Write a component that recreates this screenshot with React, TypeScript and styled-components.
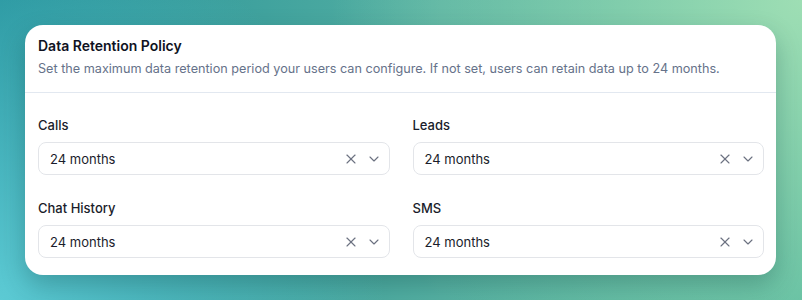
import styled, { createGlobalStyle } from "styled-components";
import { X, ChevronDown } from "lucide-react";

const GlobalStyle = createGlobalStyle`
  html, body {
    margin: 0;
    padding: 0;
  }
  body {
    font-family: Inter, "Noto Sans", sans-serif;
    -webkit-font-smoothing: antialiased;
  }
`;

const fields = [
  { label: "Calls", value: "24 months" },
  { label: "Leads", value: "24 months" },
  { label: "Chat History", value: "24 months" },
  { label: "SMS", value: "24 months" },
];

const RetentionPolicy = () => {
  return (
    <Page>
      <GlobalStyle />
      <Card>
        <Header>
          <Title>Data Retention Policy</Title>
          <Subtitle>
            Set the maximum data retention period your users can configure. If
            not set, users can retain data up to 24 months.
          </Subtitle>
        </Header>
        <Body>
          {fields.map((f) => (
            <Field key={f.label}>
              <Label>{f.label}</Label>
              <Select>
                <Value>{f.value}</Value>
                <Icons>
                  <X size={16} strokeWidth={1.7} />
                  <ChevronDown size={16} strokeWidth={1.7} />
                </Icons>
              </Select>
            </Field>
          ))}
        </Body>
      </Card>
    </Page>
  );
};

const Page = styled.div`
  box-sizing: border-box;
  width: 100%;
  height: 300px;
  padding: 25px 26px 25px 25px;
  background:
    radial-gradient(circle at 0% 100%, #5ccad4 0%, rgba(92, 202, 212, 0) 45%),
    radial-gradient(circle at 100% 0%, #9edeb4 0%, rgba(158, 222, 180, 0) 55%),
    linear-gradient(90deg, #238f98 0%, #55b0a2 55%, #4fb49c 100%);
`;

const Card = styled.div`
  height: 250px;
  box-sizing: border-box;
  background: #ffffff;
  border-radius: 18px;
  box-shadow: 0 10px 24px rgba(10, 60, 60, 0.28);
  overflow: hidden;
`;

const Header = styled.div`
  padding: 11px 13px 14px;
  border-bottom: 1px solid #e2e8f0;
`;

const Title = styled.h2`
  margin: 0;
  font-size: 14px;
  line-height: 20px;
  font-weight: 600;
  color: #0f1222;
`;

const Subtitle = styled.p`
  margin: 4px 0 0;
  font-size: 12.65px;
  line-height: 18px;
  color: #66728a;
`;

const Body = styled.div`
  display: grid;
  grid-template-columns: 1fr 1fr;
  column-gap: 23px;
  row-gap: 24px;
  padding: 23px 12px 17px 13px;
`;

const Field = styled.div`
  display: flex;
  flex-direction: column;
  gap: 8px;
`;

const Label = styled.label`
  font-size: 13px;
  line-height: 18px;
  font-weight: 500;
  color: #1a1d2b;
`;

const Select = styled.div`
  box-sizing: border-box;
  height: 33px;
  display: flex;
  align-items: center;
  justify-content: space-between;
  padding: 0 7px 0 11px;
  border: 1px solid #e3e5e9;
  border-radius: 8px;
  background: #ffffff;
`;

const Value = styled.span`
  font-size: 13px;
  color: #1a1d2b;
`;

const Icons = styled.div`
  display: flex;
  align-items: center;
  gap: 7px;
  color: #6b7180;
`;

export default RetentionPolicy;
